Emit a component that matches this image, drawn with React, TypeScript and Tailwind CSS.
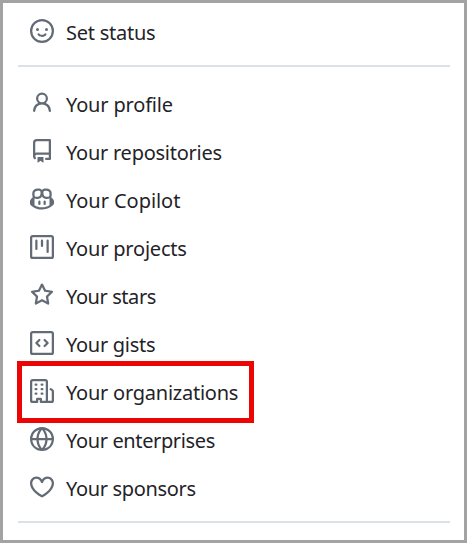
type Item = { label: string; icon: string; tracking: string; highlighted?: boolean };

const smiley =
  "M8 0a8 8 0 1 1 0 16A8 8 0 0 1 8 0ZM1.5 8a6.5 6.5 0 1 0 13 0 6.5 6.5 0 0 0-13 0Zm3.82 1.636a.75.75 0 0 1 1.038.175l.007.009c.103.118.22.222.35.31.264.178.683.37 1.285.37.602 0 1.02-.192 1.285-.371.13-.088.247-.192.35-.31l.007-.008a.75.75 0 0 1 1.222.87l-.022-.015c.02.013.021.015.021.015v.001l-.001.002-.002.003-.005.007-.014.019a2.066 2.066 0 0 1-.184.213c-.16.166-.338.316-.53.445-.63.418-1.37.638-2.127.629-.946 0-1.652-.308-2.126-.63a3.331 3.331 0 0 1-.715-.657l-.014-.02-.005-.006-.002-.003v-.002h-.001l.613-.432-.614.43a.75.75 0 0 1 .183-1.044ZM12 7a1 1 0 1 1-2 0 1 1 0 0 1 2 0ZM5 8a1 1 0 1 1 0-2 1 1 0 0 1 0 2Z";

const items: Item[] = [
  {
    label: "Your profile",
    tracking: "tracking-[-0.17px]",
    icon: "M10.561 8.073a6.005 6.005 0 0 1 3.432 5.142.75.75 0 1 1-1.498.07 4.5 4.5 0 0 0-8.99 0 .75.75 0 0 1-1.498-.07 6.004 6.004 0 0 1 3.431-5.142 3.999 3.999 0 1 1 5.123 0ZM10.5 5a2.5 2.5 0 1 0-5 0 2.5 2.5 0 0 0 5 0Z",
  },
  {
    label: "Your repositories",
    tracking: "tracking-[-0.25px]",
    icon: "M2 2.5A2.5 2.5 0 0 1 4.5 0h8.75a.75.75 0 0 1 .75.75v12.5a.75.75 0 0 1-.75.75h-2.5a.75.75 0 0 1 0-1.5h1.75v-2h-8a1 1 0 0 0-.714 1.7.75.75 0 1 1-1.072 1.05A2.495 2.495 0 0 1 2 11.5Zm10.5-1h-8a1 1 0 0 0-1 1v6.708A2.486 2.486 0 0 1 4.5 9h8ZM5 12.25a.25.25 0 0 1 .25-.25h3.5a.25.25 0 0 1 .25.25v3.25a.25.25 0 0 1-.4.2l-1.45-1.087a.249.249 0 0 0-.3 0L5.4 15.7a.25.25 0 0 1-.4-.2Z",
  },
  {
    label: "Your Copilot",
    tracking: "tracking-[-0.05px]",
    icon: "M7.998 15.035c-4.562 0-7.873-2.914-7.998-3.749V9.338c.085-.628.677-1.686 1.588-2.065.013-.07.024-.143.036-.218.029-.183.06-.384.126-.612-.201-.508-.254-1.084-.254-1.656 0-.87.128-1.769.693-2.484.579-.733 1.494-1.124 2.724-1.261 1.206-.134 2.262.034 2.944.765.05.053.096.108.139.165.044-.057.094-.112.143-.165.682-.731 1.738-.899 2.944-.765 1.23.137 2.145.528 2.724 1.261.566.715.693 1.614.693 2.484 0 .572-.053 1.148-.254 1.656.066.228.098.429.126.612.012.076.024.148.037.218.924.385 1.522 1.471 1.591 2.095v1.872c0 .766-3.351 3.795-8.002 3.795Zm0-1.485c2.28 0 4.584-1.11 5.002-1.433V7.862l-.023-.116c-.49.21-1.075.291-1.727.291-1.146 0-2.059-.327-2.71-.991A3.222 3.222 0 0 1 8 6.303a3.24 3.24 0 0 1-.544.743c-.65.664-1.563.991-2.71.991-.652 0-1.236-.081-1.727-.291l-.023.116v4.255c.419.323 2.722 1.433 5.002 1.433ZM6.762 2.83c-.193-.206-.637-.413-1.682-.297-1.019.113-1.479.404-1.713.7-.247.312-.369.789-.369 1.554 0 .793.129 1.171.308 1.371.162.181.519.379 1.442.379.853 0 1.339-.235 1.638-.54.315-.322.527-.827.617-1.553.117-.935-.037-1.395-.241-1.614Zm4.155-.297c-1.044-.116-1.488.091-1.681.297-.204.219-.359.679-.242 1.614.091.726.303 1.231.618 1.553.299.305.784.54 1.638.54.922 0 1.28-.198 1.442-.379.179-.2.308-.578.308-1.371 0-.765-.123-1.242-.37-1.554-.233-.296-.693-.587-1.713-.7ZM6.25 9.037a.75.75 0 0 1 .75.75v1.501a.75.75 0 0 1-1.5 0V9.787a.75.75 0 0 1 .75-.75Zm4.25.75v1.501a.75.75 0 0 1-1.5 0V9.787a.75.75 0 0 1 1.5 0Z",
  },
  {
    label: "Your projects",
    tracking: "tracking-[-0.2px]",
    icon: "M1.75 0h12.5C15.216 0 16 .784 16 1.75v12.5A1.75 1.75 0 0 1 14.25 16H1.75A1.75 1.75 0 0 1 0 14.25V1.75C0 .784.784 0 1.75 0ZM1.5 1.75v12.5c0 .138.112.25.25.25h12.5a.25.25 0 0 0 .25-.25V1.75a.25.25 0 0 0-.25-.25H1.75a.25.25 0 0 0-.25.25ZM11.75 3a.75.75 0 0 1 .75.75v7.5a.75.75 0 0 1-1.5 0v-7.5a.75.75 0 0 1 .75-.75Zm-8.25.75a.75.75 0 0 1 1.5 0v5.5a.75.75 0 0 1-1.5 0ZM8 3a.75.75 0 0 1 .75.75v3.5a.75.75 0 0 1-1.5 0v-3.5A.75.75 0 0 1 8 3Z",
  },
  {
    label: "Your stars",
    tracking: "tracking-[-0.42px]",
    icon: "M8 .25a.75.75 0 0 1 .673.418l1.882 3.815 4.21.612a.75.75 0 0 1 .416 1.279l-3.046 2.97.719 4.192a.751.751 0 0 1-1.088.791L8 12.347l-3.766 1.98a.75.75 0 0 1-1.088-.79l.72-4.194L.818 6.374a.75.75 0 0 1 .416-1.28l4.21-.611L7.327.668A.75.75 0 0 1 8 .25Zm0 2.445L6.615 5.5a.75.75 0 0 1-.564.41l-3.097.45 2.24 2.184a.75.75 0 0 1 .216.664l-.528 3.084 2.769-1.456a.75.75 0 0 1 .698 0l2.77 1.456-.53-3.084a.75.75 0 0 1 .216-.664l2.24-2.183-3.096-.45a.75.75 0 0 1-.564-.41L8 2.694Z",
  },
  {
    label: "Your gists",
    tracking: "tracking-[-0.28px]",
    icon: "M0 1.75C0 .784.784 0 1.75 0h12.5C15.216 0 16 .784 16 1.75v12.5A1.75 1.75 0 0 1 14.25 16H1.75A1.75 1.75 0 0 1 0 14.25Zm1.75-.25a.25.25 0 0 0-.25.25v12.5c0 .138.112.25.25.25h12.5a.25.25 0 0 0 .25-.25V1.75a.25.25 0 0 0-.25-.25Zm7.47 3.97a.75.75 0 0 1 1.06 0l2 2a.75.75 0 0 1 0 1.06l-2 2a.749.749 0 0 1-1.275-.326.749.749 0 0 1 .215-.734L10.69 8 9.22 6.53a.75.75 0 0 1 0-1.06ZM6.78 6.53 5.31 8l1.47 1.47a.749.749 0 0 1-.326 1.275.749.749 0 0 1-.734-.215l-2-2a.75.75 0 0 1 0-1.06l2-2a.751.751 0 0 1 1.042.018.751.751 0 0 1 .018 1.042Z",
  },
  {
    label: "Your organizations",
    tracking: "tracking-[-0.24px]",
    highlighted: true,
    icon: "M1.75 16A1.75 1.75 0 0 1 0 14.25V1.75C0 .784.784 0 1.75 0h8.5C11.216 0 12 .784 12 1.75v12.5c0 .085-.006.168-.018.25h2.268a.25.25 0 0 0 .25-.25V8.285a.25.25 0 0 0-.111-.208l-1.055-.703a.749.749 0 1 1 .832-1.248l1.055.703c.487.325.779.871.779 1.456v5.965A1.75 1.75 0 0 1 14.25 16h-3.5a.766.766 0 0 1-.197-.026c-.099.017-.2.026-.303.026h-3a.75.75 0 0 1-.75-.75V14h-1v1.25a.75.75 0 0 1-.75.75Zm-.25-1.75c0 .138.112.25.25.25H4v-1.25a.75.75 0 0 1 .75-.75h2.5a.75.75 0 0 1 .75.75v1.25h2.25a.25.25 0 0 0 .25-.25V1.75a.25.25 0 0 0-.25-.25h-8.5a.25.25 0 0 0-.25.25ZM3.75 6h.5a.75.75 0 0 1 0 1.5h-.5a.75.75 0 0 1 0-1.5ZM3 3.75A.75.75 0 0 1 3.75 3h.5a.75.75 0 0 1 0 1.5h-.5A.75.75 0 0 1 3 3.75Zm4 3A.75.75 0 0 1 7.75 6h.5a.75.75 0 0 1 0 1.5h-.5A.75.75 0 0 1 7 6.75ZM7.75 3h.5a.75.75 0 0 1 0 1.5h-.5a.75.75 0 0 1 0-1.5ZM3 9.75A.75.75 0 0 1 3.75 9h.5a.75.75 0 0 1 0 1.5h-.5A.75.75 0 0 1 3 9.75ZM7.75 9h.5a.75.75 0 0 1 0 1.5h-.5a.75.75 0 0 1 0-1.5Z",
  },
  {
    label: "Your enterprises",
    tracking: "tracking-[-0.37px]",
    icon: "M8 0a8 8 0 1 1 0 16A8 8 0 0 1 8 0ZM5.78 8.75a9.64 9.64 0 0 0 1.363 4.177c.255.426.542.832.857 1.215.245-.296.551-.705.857-1.215A9.64 9.64 0 0 0 10.22 8.75Zm4.44-1.5a9.64 9.64 0 0 0-1.363-4.177c-.307-.51-.612-.919-.857-1.215a9.927 9.927 0 0 0-.857 1.215A9.64 9.64 0 0 0 5.78 7.25Zm-5.944 1.5H1.543a6.507 6.507 0 0 0 4.666 5.5c-.123-.181-.24-.365-.352-.552-.715-1.192-1.437-2.874-1.581-4.948Zm-2.733-1.5h2.733c.144-2.074.866-3.756 1.58-4.948.12-.197.237-.381.353-.552a6.507 6.507 0 0 0-4.666 5.5Zm10.181 1.5c-.144 2.074-.866 3.756-1.58 4.948-.12.197-.237.381-.353.552a6.507 6.507 0 0 0 4.666-5.5Zm2.733-1.5a6.507 6.507 0 0 0-4.666-5.5c.123.181.24.365.353.552.714 1.192 1.436 2.874 1.58 4.948Z",
  },
  {
    label: "Your sponsors",
    tracking: "tracking-[-0.34px]",
    icon: "m8 14.25.345.666a.75.75 0 0 1-.69 0l-.008-.004-.018-.01a7.152 7.152 0 0 1-.31-.17 22.055 22.055 0 0 1-3.434-2.414C2.045 10.731 0 8.35 0 5.5 0 2.836 2.086 1 4.25 1 5.797 1 7.153 1.802 8 3.02 8.847 1.802 10.203 1 11.75 1 13.914 1 16 2.836 16 5.5c0 2.85-2.045 5.231-3.885 6.818a22.066 22.066 0 0 1-3.744 2.584l-.018.01-.006.003h-.002ZM4.25 2.5c-1.336 0-2.75 1.164-2.75 3 0 2.15 1.58 4.144 3.365 5.682A20.58 20.58 0 0 0 8 13.393a20.58 20.58 0 0 0 3.135-2.211C12.92 9.644 14.5 7.65 14.5 5.5c0-1.836-1.414-3-2.75-3-1.373 0-2.609.986-3.029 2.456a.749.749 0 0 1-1.442 0C6.859 3.486 5.623 2.5 4.25 2.5Z",
  },
];

function Row({ label, icon, tracking, highlighted }: Item) {
  return (
    <li className="relative flex h-12 items-center gap-3 pl-3">
      <svg viewBox="0 0 16 16" className="size-6 shrink-0 fill-[#636c76]" aria-hidden="true">
        <path d={icon} />
      </svg>
      <a href="#" className={`whitespace-nowrap pt-1 text-[20px] leading-7 ${tracking}`}>
        {label}
      </a>
      {highlighted && (
        <span className="pointer-events-none absolute -left-px -top-1.5 h-[62px] w-[237px] border-5 border-[#eb0505]" />
      )}
    </li>
  );
}

export default function App() {
  return (
    <nav className="h-[543px] w-[467px] overflow-hidden border-3 border-[#a3a3a3] bg-white pl-[15px] pr-3.5 pt-1 font-['Noto_Sans',sans-serif] text-[#1f2328]">
      <ul>
        <Row label="Set status" icon={smiley} tracking="tracking-[-0.25px]" />
      </ul>
      <hr className="mb-3 mt-2.5 border-0 h-0.5 bg-[#dce1e6]" />
      <ul>
        {items.map((item) => (
          <Row key={item.label} {...item} />
        ))}
      </ul>
      <hr className="mt-2.5 border-0 h-0.5 bg-[#dce1e6]" />
    </nav>
  );
}
